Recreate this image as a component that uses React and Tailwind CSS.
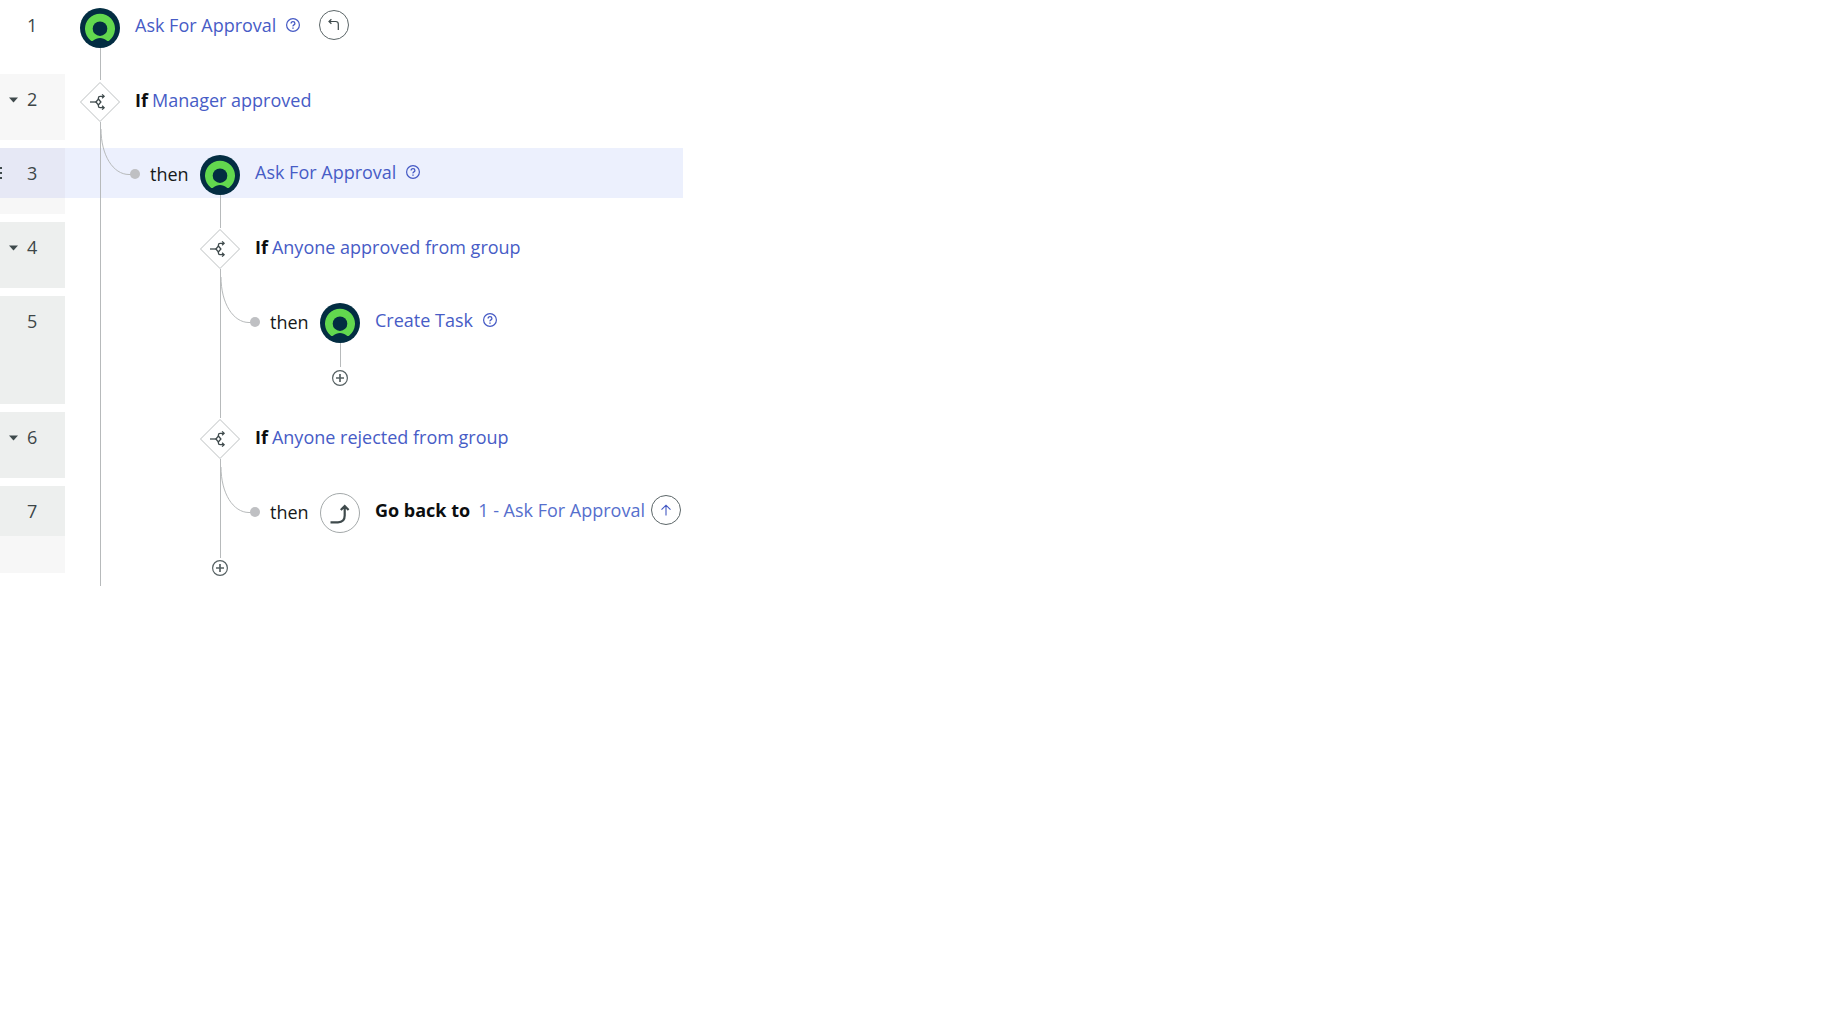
import React from "react";

function Badge() {
  return (
    <svg viewBox="0 0 40 40" className="block size-10 shrink-0" aria-hidden="true">
      <circle cx="20" cy="20" r="20" fill="#032d42" />
      <path
        d="M10.7 32.4A15 15 0 1 1 29.3 32.4a2 2 0 0 1-2.6 0C24.8 31 22.5 30 20 30S15.2 31 13.3 32.4a2 2 0 0 1-2.6 0Z"
        fill="#62d84e"
      />
      <circle cx="20" cy="20.7" r="7.3" fill="#032d42" />
    </svg>
  );
}

function Decision() {
  return (
    <svg viewBox="0 0 40 40" className="block size-10 shrink-0" fill="none" aria-hidden="true">
      <path d="M20 .5 39.5 20 20 39.5 .5 20Z" fill="#fff" stroke="#bcc0c1" />
      <g stroke="#3f4a4c" strokeWidth="1.3">
        <path d="M10 20h6" />
        <path d="M18.4 17 20.9 20l-2.5 3L15.9 20Z" />
        <path d="M18.4 17v-1q0-1.7 1.7-1.7h3.7M18.4 23v1q0 1.7 1.7 1.7h3.7" />
        <path d="m22.1 12.4 2 1.9-2 1.9M22.1 23.8l2 1.9-2 1.9" />
      </g>
    </svg>
  );
}

function GoBack() {
  return (
    <svg viewBox="0 0 40 40" className="block size-10 shrink-0" fill="none" aria-hidden="true">
      <circle cx="20" cy="20" r="19.5" fill="#fff" stroke="#a3a8a9" />
      <path d="M10.5 29.3H18q6.7 0 6.7-6.7V13.6M20.8 17l3.9-3.9 3.9 3.9" stroke="#3f4a4c" strokeWidth="2.2" />
    </svg>
  );
}

function HelpButton() {
  return (
    <button type="button" aria-label="Help" className="ml-[10px] shrink-0 text-[#4459c4]">
      <svg viewBox="0 0 14 14" className="block size-3.5" fill="none" stroke="currentColor" strokeWidth="1.2">
        <circle cx="7" cy="7" r="6.4" />
        <path d="M5.1 5.6q0-1.9 1.9-1.9t1.9 1.7q0 .9-1 1.5T7 8.4" strokeWidth="1.3" />
        <path d="M7 9.4v1.4" strokeWidth="1.4" />
      </svg>
    </button>
  );
}

function RoundButton({ label, children }) {
  return (
    <button
      type="button"
      aria-label={label}
      className="grid size-[30px] shrink-0 place-items-center rounded-full border border-[#5c6668] bg-white"
    >
      {children}
    </button>
  );
}

function AddButton() {
  return (
    <button type="button" aria-label="Add step" className="block size-4 shrink-0">
      <svg viewBox="0 0 16 16" className="block size-4" fill="none" stroke="#566163">
        <circle cx="8" cy="8" r="7.4" strokeWidth="1.2" />
        <path d="M8 4v8M4 8h8" strokeWidth="1.7" />
      </svg>
    </button>
  );
}

/* Vertical guide of an enclosing branch */
function Guide({ wide }) {
  return <div className={`self-stretch border-l border-[#b7babb] ${wide ? "w-[120px]" : "w-[100px]"}`} />;
}

/* Bend that leads from a decision to its "then" step */
function Branch({ add }) {
  return (
    <>
      <div className="flex w-10 flex-col self-stretch">
        <div className={`border-l border-[#b7babb] ${add ? "h-[72px]" : "h-full"}`}>
          <svg viewBox="0 0 40 58" className="-mt-[27px] block h-[58px] w-10" fill="none" aria-hidden="true">
            <path d="M0 8C0 34 12 53.5 28 53.5h3" stroke="#b7babb" />
            <circle cx="34" cy="53" r="5" fill="#bfc0c3" />
          </svg>
        </div>
        {add && (
          <div className="-ml-2 mt-0.5">
            <AddButton />
          </div>
        )}
      </div>
      <span className="flex h-[52px] w-[60px] items-center pl-[10px] text-[#16191a]">then</span>
    </>
  );
}

function Node({ top = "h-[6px] mb-px", lead, tail, add, children }) {
  return (
    <div className="flex w-10 shrink-0 flex-col self-stretch">
      <div className={`ml-5 w-px shrink-0 ${top} ${lead ? "bg-[#b7babb]" : ""}`} />
      {children}
      {tail && <div className={`ml-5 w-px bg-[#b7babb] ${add ? "mb-[3px] h-6" : "grow"}`} />}
      {add && (
        <div className="ml-3">
          <AddButton />
        </div>
      )}
    </div>
  );
}

function Row({ n, caret, drag, height, cell, rest = "", numBg = "", content = "", children }) {
  return (
    <li className={`flex ${height}`}>
      <div className={`mb-2 flex w-[65px] shrink-0 flex-col ${cell}`}>
        <div className={`flex h-[50px] shrink-0 items-center ${numBg}`}>
          <div className="w-[27px]">
            {caret && (
              <button type="button" aria-label="Collapse" className="ml-[9px] block">
                <svg viewBox="0 0 9 8" className="block h-2 w-[9px]">
                  <path d="M0 2.5h9L4.5 7.5Z" fill="#3f4a4c" />
                </svg>
              </button>
            )}
            {drag && (
              <svg viewBox="0 0 2 14" className="block h-3.5 w-0.5" fill="#3f4a4c" aria-label="Move">
                <path d="M0 1h2v2H0zM0 6h2v2H0zM0 11h2v2H0z" />
              </svg>
            )}
          </div>
          <span className="text-[#3d4648]">{n}</span>
        </div>
        {rest}
      </div>
      <div className={`flex grow ${content}`}>{children}</div>
    </li>
  );
}

function Label({ height = "h-12", children }) {
  return <div className={`flex items-center whitespace-nowrap pl-[15px] ${height}`}>{children}</div>;
}

function Link({ children, tone = "text-[#475cc6]" }) {
  return (
    <a href="#step" className={tone}>
      {children}
    </a>
  );
}

export default function App() {
  return (
    <main className="min-h-screen bg-white font-['Open_Sans',sans-serif] text-[18px] leading-6">
      <ol className="w-fit">
        <Row n="1" height="h-[74px]" cell="" content="pl-[15px]">
          <Node tail top="h-2">
            <Badge />
          </Node>
          <Label height="h-[50px]">
            <Link>Ask For Approval</Link>
            <HelpButton />
            <span className="ml-[19px]">
              <RoundButton label="Return point">
                <svg viewBox="0 0 14 14" className="size-3.5" fill="none" stroke="#3f4a4c" strokeWidth="1.2">
                  <path d="M4.4 1.2 2 3.5l2.4 2.3M2 3.5h6.7q2.6 0 2.6 2.6v6" />
                </svg>
              </RoundButton>
            </span>
          </Label>
        </Row>

        <Row n="2" caret height="h-[74px]" cell="bg-[#f7f7f7]" content="pl-[15px]">
          <Node lead tail top="h-[6px] mb-0.5">
            <Decision />
          </Node>
          <Label height="h-[52px]">
            <b className="mr-1 text-[#0c0e0f]">If</b>
            <Link>Manager approved</Link>
          </Label>
        </Row>

        <Row
          n="3"
          drag
          height="h-[74px]"
          cell="bg-[#f7f7f7]"
          numBg="bg-[#e6e8f5]"
          content="h-[50px] bg-[#ecf0fd] pl-[35px]"
        >
          <div className="flex h-[74px]">
            <Branch />
            <Node tail>
              <Badge />
            </Node>
            <Label>
              <Link>Ask For Approval</Link>
              <HelpButton />
            </Label>
          </div>
        </Row>

        <Row n="4" caret height="h-[74px]" cell="bg-[#edefee]" content="pl-[35px]">
          <Guide />
          <Node lead tail>
            <Decision />
          </Node>
          <Label height="h-[50px]">
            <b className="mr-1 text-[#0c0e0f]">If</b>
            <Link>Anyone approved from group</Link>
          </Label>
        </Row>

        <Row n="5" height="h-[116px]" cell="bg-[#edefee]" content="pl-[35px]">
          <Guide wide />
          <Branch />
          <Node tail add>
            <Badge />
          </Node>
          <Label>
            <Link>Create Task</Link>
            <HelpButton />
          </Label>
        </Row>

        <Row n="6" caret height="h-[74px]" cell="bg-[#edefee]" content="pl-[35px]">
          <Guide />
          <Node lead tail>
            <Decision />
          </Node>
          <Label height="h-[50px]">
            <b className="mr-1 text-[#0c0e0f]">If</b>
            <Link>Anyone rejected from group</Link>
          </Label>
        </Row>

        <Row
          n="7"
          height="h-[100px]"
          cell=""
          numBg="bg-[#edefee]"
          rest={<div className="h-[37px] shrink-0 bg-[#f7f7f7]" />}
          content="pl-[35px] pr-0.5"
        >
          <Guide wide />
          <Branch add />
          <Node>
            <GoBack />
          </Node>
          <Label>
            <b className="mr-2 text-[#0c0e0f]">Go back to</b>
            <Link tone="text-[#566fcd]">1 - Ask For Approval</Link>
            <span className="ml-1.5">
              <RoundButton label="Jump to step 1">
                <svg viewBox="0 0 12 12" className="size-3" fill="none" stroke="#4459c4" strokeWidth="1.1">
                  <path d="M6 11.5V1.2M1.5 5.7 6 1.2l4.5 4.5" />
                </svg>
              </RoundButton>
            </span>
          </Label>
        </Row>
      </ol>
    </main>
  );
}
